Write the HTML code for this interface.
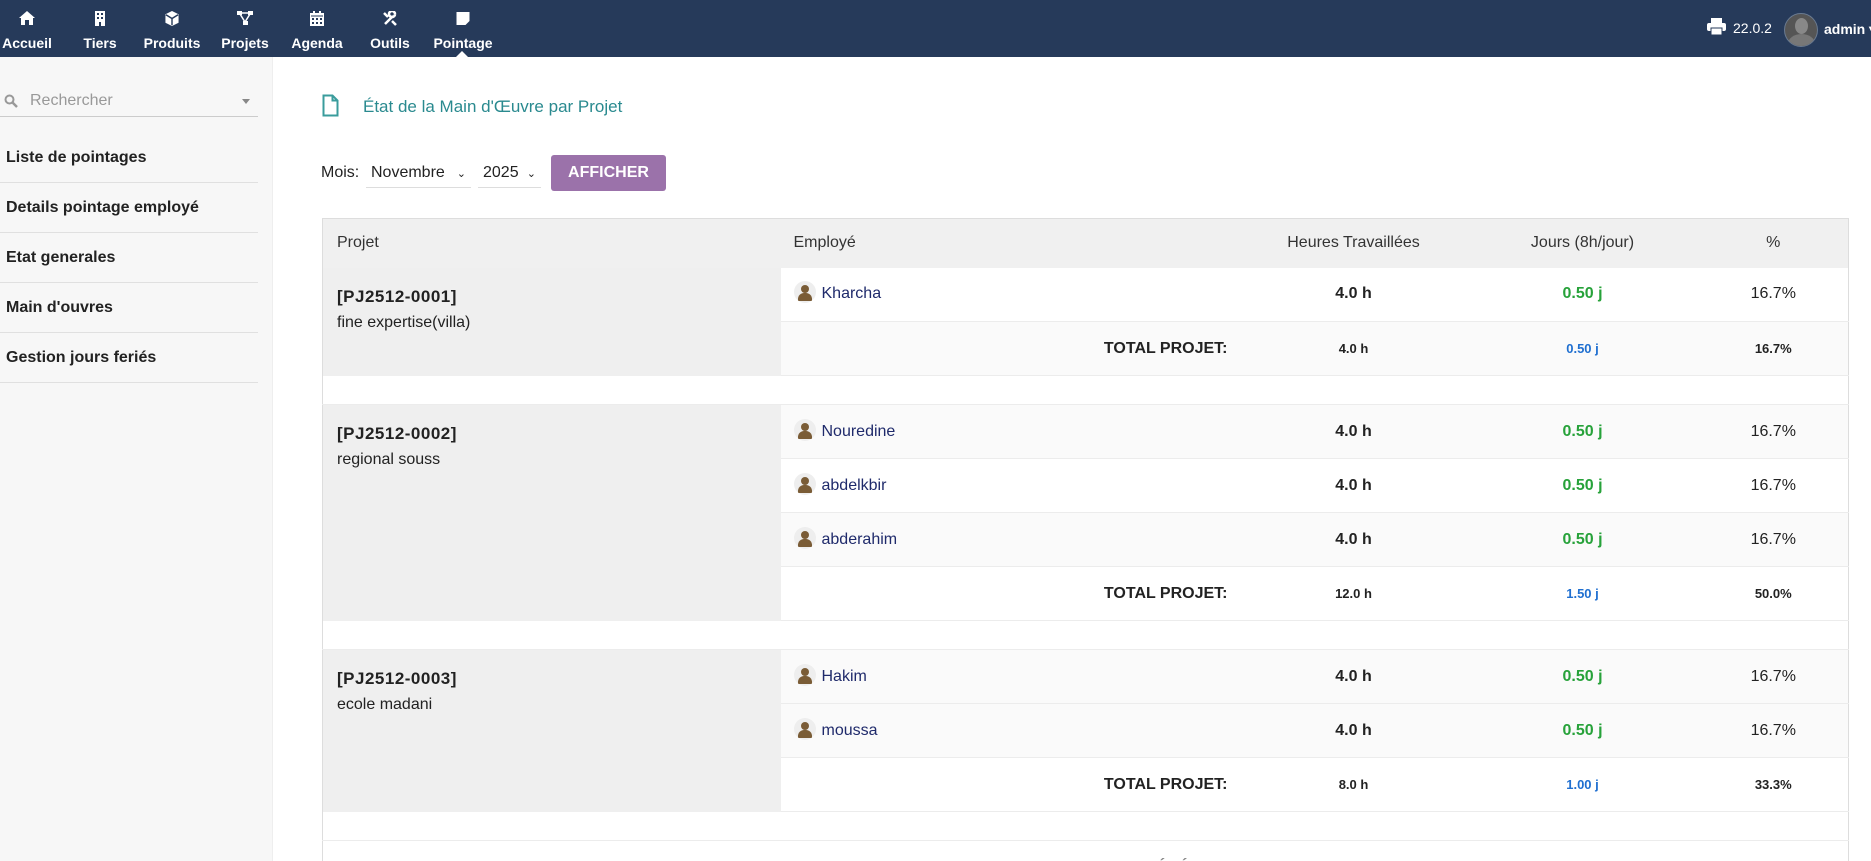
<!DOCTYPE html>
<html><head><meta charset="utf-8"><style>
*{box-sizing:border-box;margin:0;padding:0}
html{width:1871px;height:861px;overflow:hidden}
body{width:1871px;height:861px;overflow:hidden;font-family:"Liberation Sans",Arial,sans-serif;background:#fff;color:#222;position:relative}
.nav{position:absolute;left:0;top:0;width:1871px;height:57px;background:#263a5a}
.ni{position:absolute;top:0;height:57px;color:#fff;font-size:14px;font-weight:bold;text-align:center;transform:translateX(-50%)}
.ni svg{position:absolute;left:50%;top:11px;transform:translateX(-50%)}
.ni span{position:absolute;top:35px;left:50%;transform:translateX(-50%);white-space:nowrap}
.side{position:absolute;left:0;top:57px;width:273px;height:804px;background:#f7f7f7;border-right:1px solid #eee}
.si{position:absolute;left:0;width:258px;height:50px;border-bottom:1px solid #e0e0e0;font-weight:bold;font-size:16px;padding-left:6px;color:#222}
table{position:absolute;left:322px;top:218px;width:1526px;border-collapse:collapse;table-layout:fixed;border:1px solid #ddd;font-size:16px}
th{background:#f0f0f0;font-weight:normal;color:#333;height:49px;font-size:16px}
td{height:54px;border-bottom:1px solid #ececec}
td.p{background:#efefef;vertical-align:top;padding:16px 14px;border-bottom:none;line-height:25px}
td.p b{font-size:17px;letter-spacing:.5px}
.c{text-align:center}
.e{padding-left:13px;color:#1f2a6b}
.av{display:inline-block;width:22px;height:22px;border-radius:50%;background:#eee;vertical-align:middle;margin-right:6px;position:relative;top:-2px}
.h{font-weight:bold}.g{color:#27a23a;font-weight:bold}
.tr td{font-size:13px;font-weight:bold}
.tl{text-align:right;padding-right:13px;font-size:16px!important}
.bl{color:#1f6fd0}
tr.sp td{height:29px;background:#fff}
.alt td:not(.p){background:#fafafa}
</style></head><body>
<div class="nav">
<div class="ni" style="left:27px"><svg width="16" height="14" viewBox="0 0 16 14"><path d="M8 0L0 7h2v7h4V9h4v5h4V7h2z" fill="#fff"/></svg><span>Accueil</span></div>
<div class="ni" style="left:100px"><svg width="12" height="15" viewBox="0 0 12 15"><rect x="1" y="0" width="10" height="15" fill="#fff"/><g fill="#263a5a"><rect x="3" y="2" width="2" height="2"/><rect x="7" y="2" width="2" height="2"/><rect x="3" y="6" width="2" height="2"/><rect x="7" y="6" width="2" height="2"/><rect x="5" y="11" width="2" height="4"/></g></svg><span>Tiers</span></div>
<div class="ni" style="left:172px"><svg width="15" height="15" viewBox="0 0 16 16"><path d="M8 0l7 3.5v9L8 16 1 12.5v-9z" fill="#fff"/><path d="M8 8v7M1.5 4L8 8l6.5-4" stroke="#263a5a" stroke-width="1.5" fill="none"/></svg><span>Produits</span></div>
<div class="ni" style="left:245px"><svg width="16" height="14" viewBox="0 0 16 14"><rect x="0" y="0" width="5" height="4" fill="#fff"/><rect x="11" y="0" width="5" height="4" fill="#fff"/><rect x="6" y="10" width="5" height="4" fill="#fff"/><path d="M3 3l5 8M13 3l-5 8M4 2h8" stroke="#fff" stroke-width="1.5"/></svg><span>Projets</span></div>
<div class="ni" style="left:317px"><svg width="14" height="15" viewBox="0 0 14 15"><rect x="0" y="2" width="14" height="13" fill="#fff"/><rect x="3" y="0" width="2" height="4" fill="#fff"/><rect x="9" y="0" width="2" height="4" fill="#fff"/><path d="M1 5h12" stroke="#263a5a"/><g fill="#263a5a"><rect x="2" y="7" width="2" height="2"/><rect x="6" y="7" width="2" height="2"/><rect x="10" y="7" width="2" height="2"/><rect x="2" y="11" width="2" height="2"/><rect x="6" y="11" width="2" height="2"/><rect x="10" y="11" width="2" height="2"/></g></svg><span>Agenda</span></div>
<div class="ni" style="left:390px"><svg width="16" height="16" viewBox="0 0 16 16"><path d="M3 13L11 5M2 2l4 4M13 3a3 3 0 1 0 0 .1M10 10l4 4" stroke="#fff" stroke-width="2.5" fill="none"/></svg><span>Outils</span></div>
<div class="ni" style="left:463px"><svg width="13" height="14" viewBox="0 0 13 14"><path d="M0 1h13v9l-4 4H0z" fill="#fff"/></svg><span>Pointage</span></div>
<div style="position:absolute;left:456px;top:51px;width:0;height:0;border-left:6px solid transparent;border-right:6px solid transparent;border-bottom:6px solid #fff"></div>
<svg style="position:absolute;left:1707px;top:18px" width="19" height="17" viewBox="0 0 19 17"><rect x="4" y="0" width="11" height="5" fill="#fff"/><rect x="0" y="5" width="19" height="8" rx="2" fill="#fff"/><rect x="4" y="10" width="11" height="7" fill="#fff" stroke="#263a5a"/></svg>
<div style="position:absolute;left:1733px;top:20px;color:#fff;font-size:14px">22.0.2</div>
<div style="position:absolute;left:1784px;top:13px;width:34px;height:34px;border-radius:50%;background:#555;border:1px solid #6a7a90;overflow:hidden"><div style="position:absolute;left:10px;top:4px;width:13px;height:16px;border-radius:50%;background:#888"></div><div style="position:absolute;left:3px;top:20px;width:27px;height:20px;border-radius:50% 50% 0 0;background:#777"></div></div>
<div style="position:absolute;left:1824px;top:21px;color:#fff;font-size:14px;font-weight:bold;white-space:nowrap">admin ▾</div>
</div>
<div class="side">
<svg style="position:absolute;left:4px;top:37px" width="14" height="14" viewBox="0 0 14 14"><circle cx="5.5" cy="5.5" r="4" stroke="#999" stroke-width="2" fill="none"/><path d="M8.5 8.5L13 13" stroke="#999" stroke-width="2.5"/></svg>
<div style="position:absolute;left:30px;top:35px;color:#999;font-size:16px">Rechercher</div>
<div style="position:absolute;left:242px;top:42px;border-left:4px solid transparent;border-right:4px solid transparent;border-top:5px solid #888"></div>
<div style="position:absolute;left:0;top:59px;width:258px;border-bottom:1px solid #ccc"></div>
<div class="si" style="top:76px;line-height:50px">Liste de pointages</div>
<div class="si" style="top:126px;line-height:50px">Details pointage employé</div>
<div class="si" style="top:176px;line-height:50px">Etat generales</div>
<div class="si" style="top:226px;line-height:50px">Main d'ouvres</div>
<div class="si" style="top:276px;line-height:50px">Gestion jours feriés</div>
</div>
<svg style="position:absolute;left:322px;top:94px" width="17" height="23" viewBox="0 0 17 23"><path d="M1.5 1.5h9l5 5v15h-14z" fill="none" stroke="#3a9c9c" stroke-width="2"/><path d="M10.5 1.5v5h5" fill="none" stroke="#3a9c9c" stroke-width="2"/></svg>
<div style="position:absolute;left:363px;top:97px;font-size:17px;color:#2a8a8f">État de la Main d'Œuvre par Projet</div>
<div style="position:absolute;left:321px;top:164px;font-size:16px">Mois:</div>
<div style="position:absolute;left:366px;top:158px;width:105px;height:30px;border-bottom:1px solid #ddd;font-size:16px;padding:6px 5px">Novembre <span style="float:right;font-size:11px;margin-top:3px">⌄</span></div>
<div style="position:absolute;left:478px;top:158px;width:63px;height:30px;border-bottom:1px solid #ddd;font-size:16px;padding:6px 5px">2025 <span style="float:right;font-size:11px;margin-top:3px">⌄</span></div>
<div style="position:absolute;left:551px;top:155px;width:115px;height:36px;background:#9b72aa;border-radius:3px;color:#fff;font-weight:bold;font-size:16px;text-align:center;line-height:36px">AFFICHER</div>
<table>
<colgroup><col style="width:458px"><col style="width:460px"><col style="width:226px"><col style="width:232px"><col style="width:150px"></colgroup>
<tr><th style="text-align:left;padding-left:14px">Projet</th><th style="text-align:left;padding-left:13px">Employé</th><th>Heures Travaillées</th><th>Jours (8h/jour)</th><th>%</th></tr>
<tr><td class="p" rowspan="2"><b>[PJ2512-0001]</b><br>fine expertise(villa)</td><td class="e"><span class="av"></span>Kharcha</td><td class="c h">4.0 h</td><td class="c g">0.50 j</td><td class="c">16.7%</td></tr>
<tr class="tr alt"><td class="tl">TOTAL PROJET:</td><td class="c">4.0 h</td><td class="c bl">0.50 j</td><td class="c">16.7%</td></tr>
<tr class="sp"><td colspan="5"></td></tr>
<tr class="alt"><td class="p" rowspan="4"><b>[PJ2512-0002]</b><br>regional souss</td><td class="e"><span class="av"></span>Nouredine</td><td class="c h">4.0 h</td><td class="c g">0.50 j</td><td class="c">16.7%</td></tr>
<tr><td class="e"><span class="av"></span>abdelkbir</td><td class="c h">4.0 h</td><td class="c g">0.50 j</td><td class="c">16.7%</td></tr>
<tr class="alt"><td class="e"><span class="av"></span>abderahim</td><td class="c h">4.0 h</td><td class="c g">0.50 j</td><td class="c">16.7%</td></tr>
<tr class="tr"><td class="tl">TOTAL PROJET:</td><td class="c">12.0 h</td><td class="c bl">1.50 j</td><td class="c">50.0%</td></tr>
<tr class="sp"><td colspan="5"></td></tr>
<tr class="alt"><td class="p" rowspan="3"><b>[PJ2512-0003]</b><br>ecole madani</td><td class="e"><span class="av"></span>Hakim</td><td class="c h">4.0 h</td><td class="c g">0.50 j</td><td class="c">16.7%</td></tr>
<tr class="alt"><td class="e"><span class="av"></span>moussa</td><td class="c h">4.0 h</td><td class="c g">0.50 j</td><td class="c">16.7%</td></tr>
<tr class="tr"><td class="tl">TOTAL PROJET:</td><td class="c">8.0 h</td><td class="c bl">1.00 j</td><td class="c">33.3%</td></tr>
<tr class="sp"><td colspan="5"></td></tr>
<tr class="tr"><td></td><td class="tl" style="color:#888">TOTAL GÉNÉRAL:</td><td class="c" style="color:#888">24.0 h</td><td class="c" style="color:#e04a1a">3.00 j</td><td class="c" style="color:#888">100%</td></tr>
</table>
<style>.av::before{content:"";position:absolute;left:7px;top:4px;width:8px;height:8px;border-radius:50%;background:#7a5c36}.av::after{content:"";position:absolute;left:4px;top:12px;width:14px;height:8px;border-radius:6px 6px 1px 1px;background:#7a5c36}</style>
</body></html>
